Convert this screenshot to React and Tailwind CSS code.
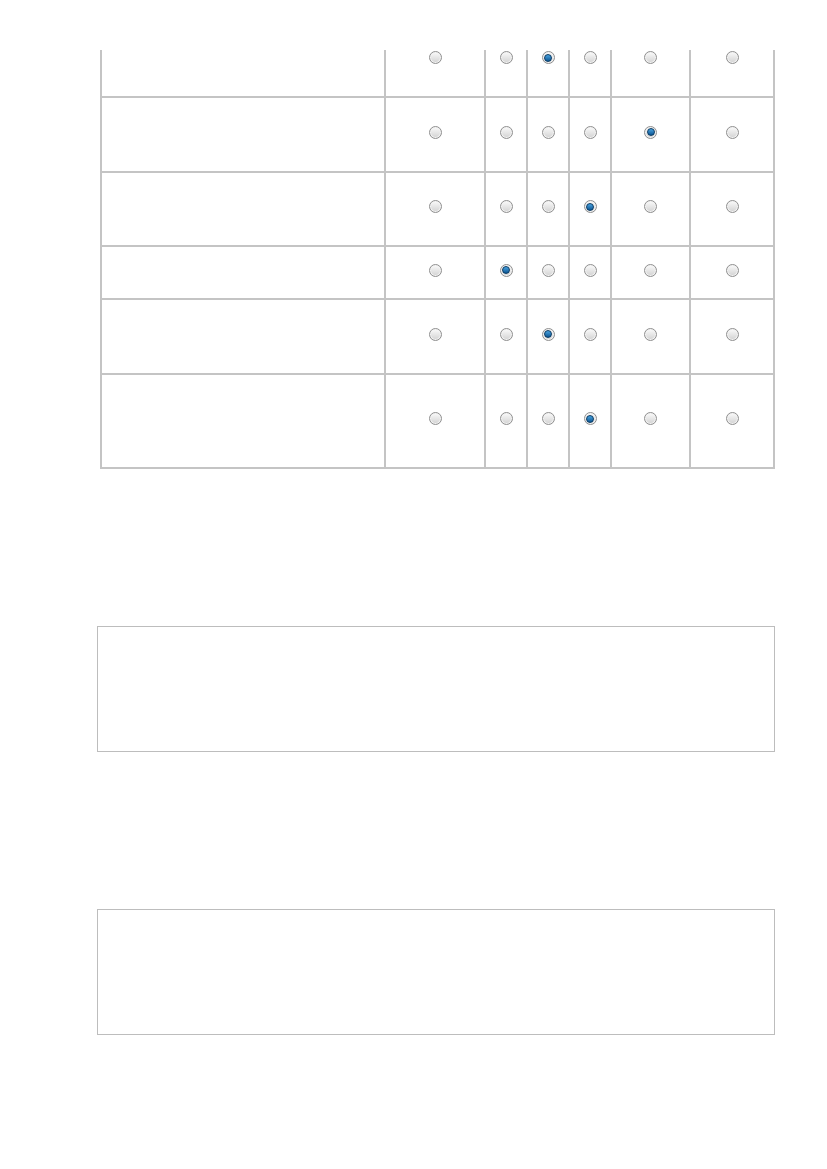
import React from "react";

const rows = [
  { h: "h-[48px]", first: true, pick: 2 },
  { h: "h-[75px]", pick: 4 },
  { h: "h-[74px]", pick: 3 },
  { h: "h-[53px]", pick: 1 },
  { h: "h-[75px]", pick: 2 },
  { h: "h-[94px]", pick: 3 },
];

const cellWidths = ["w-[100px]", "w-[42px]", "w-[42px]", "w-[42px]", "w-[79px]", "w-[84px]"];

const Radio = ({ checked }) => (
  <span className="inline-flex items-center justify-center w-[13px] h-[13px] rounded-full border border-[#8f8f8f] bg-gradient-to-b from-[#fbfbfb] to-[#d2d2d2] shadow-[inset_0_0_0_1px_#f2f2f2]">
    {checked && (
      <span className="block w-[8px] h-[8px] rounded-full border border-[#0a3a63] bg-gradient-to-b from-[#48a3e0] to-[#0b5794]" />
    )}
  </span>
);

const App = () => {
  return (
    <div className="w-[827px] h-[1169px] bg-white pt-[50px]">
      <div className="ml-[100px] w-[675px] border-l-2 border-[#c4c4c4]">
        {rows.map((row, i) => (
          <div key={i} className={`flex ${row.h} border-b-2 border-[#c4c4c4]`}>
            <div className="w-[284px] border-r-2 border-[#c4c4c4]" />
            {cellWidths.map((w, j) => (
              <div
                key={j}
                className={`${w} border-r-2 border-[#c4c4c4] flex justify-center ${
                  row.first ? "items-start pt-[1px]" : "items-center pb-[5px]"
                }`}
              >
                <Radio checked={row.pick === j} />
              </div>
            ))}
          </div>
        ))}
      </div>

      <div className="ml-[97px] mt-[157px] w-[678px] h-[126px] border border-[#bdbdbd]" />
      <div className="ml-[97px] mt-[157px] w-[678px] h-[126px] border border-[#bdbdbd]" />
    </div>
  );
};

export default App;
